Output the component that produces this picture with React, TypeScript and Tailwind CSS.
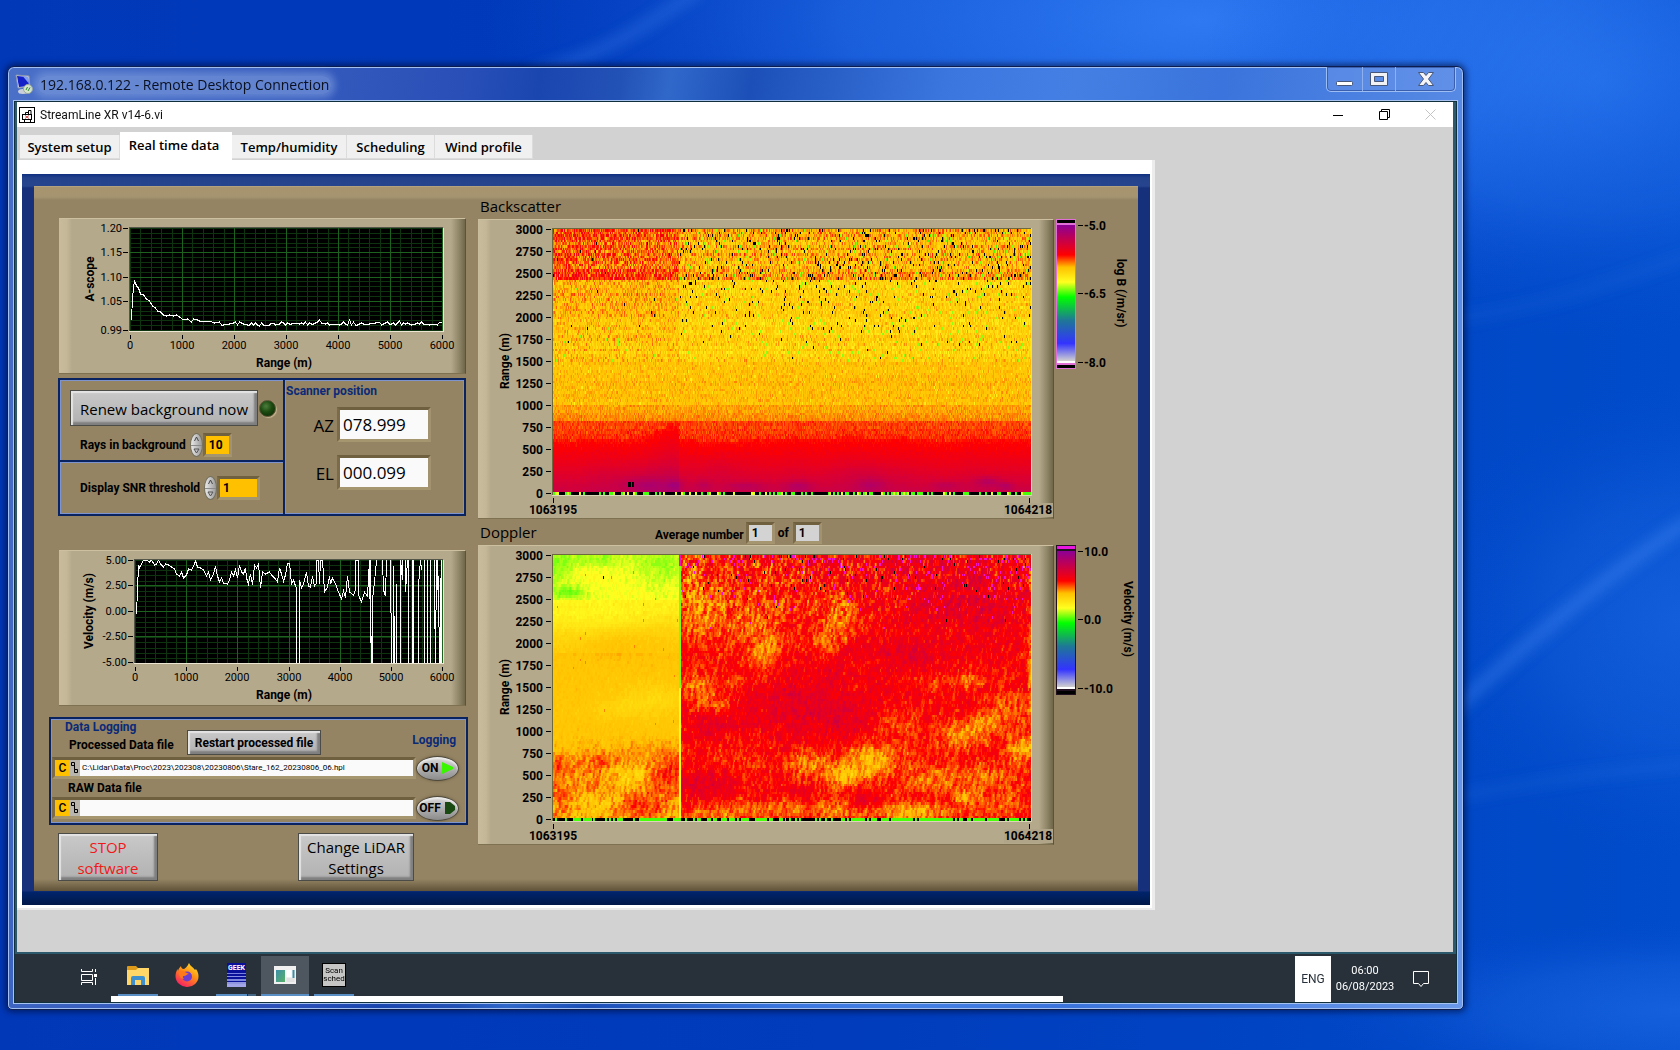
import React, { useMemo, type ReactNode } from "react";

/* ------------------------------------------------------------------ */
/* Colour scale and deterministic noise                                */
/* ------------------------------------------------------------------ */

type Stop = [number, number, number, number];

const STOPS: Stop[] = [
  [0, 140, 0, 150],
  [0.22, 255, 0, 0],
  [0.31, 255, 192, 0],
  [0.42, 255, 255, 32],
  [0.53, 0, 255, 0],
  [0.7, 30, 120, 150],
  [0.87, 51, 51, 255],
  [1, 208, 208, 208],
];

function scaleColour(t: number): string {
  const v = Math.min(1, Math.max(0, t));
  let i = 1;
  while (i < STOPS.length - 1 && STOPS[i][0] < v) i++;
  const a = STOPS[i - 1];
  const b = STOPS[i];
  const k = (v - a[0]) / (b[0] - a[0]);
  const mix = (n: number) => Math.round((a[n] as number) + ((b[n] as number) - (a[n] as number)) * k);
  return `rgb(${mix(1)},${mix(2)},${mix(3)})`;
}

function hash(x: number, y: number, s: number): number {
  let h = (x * 374761393 + y * 668265263 + s * 1442695041) | 0;
  h = Math.imul(h ^ (h >>> 13), 1274126177);
  h = Math.imul(h ^ (h >>> 15), 2246822519);
  return ((h ^ (h >>> 16)) >>> 0) / 4294967296;
}

function smooth(x: number, y: number, s: number): number {
  const xi = Math.floor(x);
  const yi = Math.floor(y);
  const fx = x - xi;
  const fy = y - yi;
  const u = fx * fx * (3 - 2 * fx);
  const v = fy * fy * (3 - 2 * fy);
  const top = hash(xi, yi, s) * (1 - u) + hash(xi + 1, yi, s) * u;
  const bot = hash(xi, yi + 1, s) * (1 - u) + hash(xi + 1, yi + 1, s) * u;
  return top * (1 - v) + bot * v;
}

type Bump = [number, number, number, number, number];

function bumps(list: Bump[], x: number, y: number): number {
  let sum = 0;
  for (const [cx, cy, rx, ry, amp] of list) {
    const dx = (x - cx) / rx;
    const dy = (y - cy) / ry;
    const d = dx * dx + dy * dy;
    if (d < 6) sum += amp * Math.exp(-d);
  }
  return sum;
}

/* ------------------------------------------------------------------ */
/* Fields                                                              */
/* ------------------------------------------------------------------ */

const PLOT_W = 478;
const PLOT_H = 266;
const ROWS = 100;
const SPLIT = 126;
const LEVELS = 64;

const BLACK = "#000000";
const MAGENTA = "#f010d0";

type Cell = number | string;

const PURPLE: Bump[] = [
  [92, 256, 22, 7, -0.05],
  [78, 245, 40, 16, -0.02],
  [122, 256, 8, 5, -0.05],
  [150, 256, 8, 5, -0.04],
  [192, 257, 20, 4, -0.04],
  [245, 257, 14, 5, -0.05],
  [165, 240, 20, 15, -0.02],
  [318, 256, 14, 6, -0.05],
  [312, 244, 30, 12, -0.02],
  [392, 256, 14, 4, -0.04],
  [434, 253, 12, 5, -0.06],
  [452, 257, 8, 4, -0.05],
];

function backscatter(x: number, row: number): Cell {
  const y = (row + 0.5) * (PLOT_H / ROWS);
  const m = 3000 - row * 30;
  const left = x < SPLIT;
  const n = hash(x, row, 1);
  const n2 = hash(x, row, 2);
  const g = n + n2 - 1;
  const stripe = hash(0, row, 3) - 0.5;

  if (m <= 30) {
    const c = hash(x >> 1, 0, 4);
    const bias = smooth(x / 30, 0, 5) * 0.5;
    if (c > 0.25 + bias) return BLACK;
    return c > 0.12 ? 0.5 : 0.43;
  }
  if (x >= 75 && x <= 80 && x !== 78 && m >= 120 && m < 180) return BLACK;

  const plume = Math.max(0, 1 - Math.abs(x - 118) / 34) * (left ? 170 : 0);
  const edge = m - plume - smooth(x / 22, 0, 6) * 50 + 25;
  if (edge < 640 && m < 870) {
    const base = edge < 300 ? 0.11 + (edge / 300) * 0.06 : 0.17 + ((edge - 300) / 340) * 0.058;
    return base + g * (edge > 460 ? 0.014 : 0.004) + bumps(PURPLE, x, y);
  }
  if (m < 870) return 0.242 + Math.max(0, edge - 640) * 0.00006 + g * 0.028 + stripe * 0.006;
  if (m < 1050) return 0.28 + ((m - 870) / 180) * 0.022 + g * 0.028 + stripe * 0.01;
  if (m < 1530) return 0.314 + g * 0.034 + stripe * 0.012 + (n > 0.97 ? 0.05 : 0);

  const far = Math.min(1, x / 300);
  if (m < 2460) {
    const drop = left ? 0.003 : 0.004 + ((m - 1530) / 900) * 0.028;
    if (n2 < drop * (m > 1700 ? 1 : 0.3)) return BLACK;
    if (hash(x, row, 8) < (left ? 0.004 : 0.012 + far * 0.02)) return 0.47;
    const red = left ? Math.max(0, (m - 1700) / 700) * 0.02 : 0;
    return (left ? 0.328 : 0.342) - red + g * 0.065 + stripe * 0.02 + (n > 0.95 ? -0.04 : 0);
  }
  const drop = left ? 0.004 : 0.055;
  if (n2 < drop) return BLACK;
  if (!left && hash(x, row, 9) < 0.05) return 0.45 + n * 0.05;
  const lowEdge = m < 2540 ? -0.02 : 0;
  const topEdge = m > 2910 ? -0.015 : 0;
  return (left ? 0.26 + x * 0.0001 : 0.312) + g * 0.08 + stripe * 0.026 + lowEdge + topEdge;
}

const WARM: Bump[] = [
  [144, 132, 24, 13, 0.07],
  [164, 152, 20, 10, 0.06],
  [182, 128, 16, 8, 0.04],
  [210, 99, 14, 24, 0.05],
  [197, 56, 54, 44, 0.04],
  [140, 30, 20, 40, 0.05],
  [150, 68, 22, 22, 0.03],
  [177, 209, 36, 22, 0.02],
  [254, 209, 22, 12, 0.065],
  [217, 255, 50, 9, 0.06],
  [155, 262, 30, 10, 0.05],
  [285, 62, 16, 22, 0.06],
  [271, 90, 14, 12, 0.05],
  [315, 205, 26, 17, 0.085],
  [288, 222, 20, 11, 0.085],
  [348, 165, 26, 18, 0.045],
  [408, 182, 26, 14, 0.065],
  [437, 167, 24, 11, 0.065],
  [415, 125, 14, 8, 0.05],
  [380, 125, 16, 8, 0.03],
  [471, 195, 18, 14, 0.085],
  [385, 225, 28, 14, 0.065],
  [358, 256, 46, 9, 0.09],
  [436, 222, 26, 14, 0.05],
  [415, 242, 14, 8, 0.07],
  [455, 250, 30, 12, 0.045],
  [455, 150, 20, 10, 0.05],
  [477, 120, 3, 44, 0.07],
  [280, 254, 24, 12, 0.05],
  [340, 205, 40, 30, 0.015],
];

const COOL: Bump[] = [
  [234, 149, 80, 30, -0.035],
  [260, 120, 30, 24, -0.02],
  [150, 229, 34, 16, -0.05],
  [351, 99, 50, 20, -0.035],
  [415, 55, 60, 26, -0.04],
  [285, 165, 46, 20, -0.03],
  [160, 170, 30, 14, -0.03],
  [251, 239, 12, 9, -0.05],
  [310, 245, 18, 10, -0.04],
  [400, 20, 60, 20, -0.02],
  [340, 150, 40, 20, -0.02],
];

const LEFT_RED: Bump[] = [
  [44, 205, 30, 12, -0.03],
  [117, 222, 22, 26, -0.07],
  [8, 240, 14, 14, -0.05],
  [4, 208, 8, 10, -0.05],
  [84, 252, 26, 14, -0.06],
  [60, 225, 10, 12, -0.03],
  [40, 232, 12, 8, -0.03],
  [118, 196, 14, 10, -0.03],
  [90, 190, 20, 6, -0.02],
  [28, 215, 24, 16, -0.02],
  [70, 222, 20, 12, 0.03],
  [48, 244, 20, 10, 0.03],
];

const LEFT_YELLOW: Bump[] = [
  [100, 145, 40, 16, 0.03],
  [60, 155, 30, 10, 0.015],
  [40, 62, 60, 14, 0.02],
  [96, 82, 44, 16, -0.02],
  [54, 90, 26, 12, -0.015],
  [15, 37, 22, 7, 0.06],
  [4, 14, 14, 14, 0.04],
  [40, 4, 40, 8, 0.03],
  [110, 12, 24, 22, 0.035],
  [44, 24, 20, 14, -0.008],
];

function doppler(x: number, row: number): Cell {
  const y = (row + 0.5) * (PLOT_H / ROWS);
  const m = 3000 - row * 30;
  const n = hash(x, row, 11);
  const n2 = hash(x, row, 12);
  const g = n + n2 - 1;

  if (m <= 30) {
    const c = hash(x >> 1, 0, 14);
    const bias = smooth(x / 24, 0, 15);
    return c < bias * 0.7 ? BLACK : 0.5;
  }
  if (x >= SPLIT && x < SPLIT + 2) {
    if (m > 2880) return MAGENTA;
    return m > 1500 ? 0.48 : 0.43;
  }
  const fine = smooth(x / 2 + y * 0.1, y / 5 - x * 0.03, 16) - 0.5;
  const grain = hash(x >> 1, row, 18) - 0.5;
  const streak = smooth((x * 0.8 - y * 0.6) / 26, (x * 0.6 + y * 0.8) / 9, 17) - 0.5;

  if (x < SPLIT) {
    if (x === 50 && row === 8) return BLACK;
    let t = 0.32;
    if (m > 2500) t = 0.415 + ((m - 2500) / 500) * 0.014;
    else if (m > 1900) t = 0.33 + ((m - 1900) / 600) * 0.065;
    t += bumps(LEFT_YELLOW, x, y);
    const low = Math.max(0, Math.min(1, (y - 178) / 30));
    const ragged = low * (bumps(LEFT_RED, x, y) + streak * 0.03 + fine * 0.06 + grain * 0.025 - 0.014);
    t += ragged + fine * (m > 2300 ? 0.03 : 0.016) + grain * (m > 2300 ? 0.02 : 0.012);
    if (low === 0 && n < 0.003) t = 0.28;
    return t;
  }

  const topBand = Math.max(0, (m - 2000) / 1000);
  const far = (x - SPLIT) / (PLOT_W - SPLIT);
  if (n < topBand * 0.014 * (m > 2600 ? 1.6 : 0.5)) return BLACK;
  if (n2 < topBand * topBand * (0.06 + far * 0.06)) return MAGENTA;
  const mottled = topBand * 0.05;
  return (
    0.216 +
    bumps(WARM, x, y) +
    bumps(COOL, x, y) +
    streak * 0.02 +
    fine * (0.08 + mottled) +
    grain * (0.034 + mottled) +
    g * 0.014
  );
}

/* ------------------------------------------------------------------ */
/* Chart pieces                                                        */
/* ------------------------------------------------------------------ */

function Heatmap({ field, x0, y0 }: { field: (x: number, row: number) => Cell; x0: number; y0: number }) {
  const paths = useMemo(() => {
    const byColour = new Map<string, string[]>();
    for (let row = 0; row < ROWS; row++) {
      const top = Math.round((row * PLOT_H) / ROWS);
      const h = Math.round(((row + 1) * PLOT_H) / ROWS) - top;
      let start = 0;
      let current = "";
      for (let x = 0; x <= PLOT_W; x++) {
        let colour = "";
        if (x < PLOT_W) {
          const c = field(x, row);
          colour = typeof c === "string" ? c : scaleColour(Math.round(c * LEVELS * 2) / (LEVELS * 2));
        }
        if (colour !== current) {
          if (current) {
            const list = byColour.get(current) ?? [];
            list.push(`M${x0 + start} ${y0 + top}h${x - start}v${h}h${start - x}z`);
            byColour.set(current, list);
          }
          current = colour;
          start = x;
        }
      }
    }
    return [...byColour.entries()].map(([fill, list]) => ({ fill, d: list.join("") }));
  }, [field, x0, y0]);
  return (
    <g shapeRendering="crispEdges">
      {paths.map((p) => (
        <path key={p.fill} fill={p.fill} d={p.d} />
      ))}
    </g>
  );
}

const PANEL =
  "border-t border-b border-r border-t-[#cdc0a0] border-b-[#7d7152] border-r-[#5d523a] bg-[linear-gradient(90deg,#c9bc9c_0,#c4b797_8px,#b5a98c_13px,#b5a98c_calc(100%-14px),#8f8567_calc(100%-6px),#6f6549_100%)]";

function HeatPanel({ title, field }: { title: string; field: (x: number, row: number) => Cell }) {
  const ticks = Array.from({ length: 13 }, (_, i) => 3000 - i * 250);
  return (
    <div className={PANEL}>
      <svg width="575" height="298" viewBox="0 1 575 298" role="img" aria-label={title} className="block">
        <rect x="74" y="9" width="479" height="267" fill="#6d6a40" />
        <path d="M553.500 9v267.500H74" fill="none" stroke="#dcd6b8" />
        <Heatmap field={field} x0={75} y0={10} />
        {ticks.map((v, i) => {
          const y = Math.round(10 + i * 22.04);
          return (
            <g key={v}>
              <path d={`M68 ${y}.5h5`} stroke="#000" />
              <text x="65" y={y + 5} textAnchor="end" className="text-[12px] font-bold">
                {v}
              </text>
            </g>
          );
        })}
        <path d="M75.5 279v5M551.5 279v5" stroke="#000" />
        <rect x="526" y="284" width="49" height="14" fill="#b0a588" />
        <text x="75" y="295" textAnchor="middle" className="text-[12px] font-bold">
          1063195
        </text>
        <text x="550" y="295" textAnchor="middle" className="text-[12px] font-bold">
          1064218
        </text>
        <text transform="translate(31 142) rotate(-90)" textAnchor="middle" className="text-[12px] font-bold">
          Range (m)
        </text>
      </svg>
    </div>
  );
}

function ColourBar({
  id,
  labels,
  name,
  nameX,
  capTop,
  outline,
}: {
  id: string;
  labels: string[];
  name: string;
  nameX: number;
  capTop: string;
  outline: string;
}) {
  return (
    <svg width="82" height="150" viewBox="0 0 82 150" role="img" aria-label={name} className="block shrink-0">
      <defs>
        <linearGradient id={id} x1="0" y1="0" x2="0" y2="1">
          {STOPS.map(([t]) => (
            <stop key={t} offset={t} stopColor={scaleColour(t)} />
          ))}
        </linearGradient>
      </defs>
      <rect width="20" height="150" fill={outline} />
      <rect x="1" y="1" width="18" height="3" fill={capTop} />
      <rect x="1" y="6" width="18" height="136" fill={`url(#${id})`} />
      <rect x="1" y="142" width="18" height="2" fill="#fff" />
      <rect x="1" y="146" width="18" height="3" fill="#000" />
      {labels.map((label, i) => {
        const y = [6, 74, 143][i];
        return (
          <g key={label}>
            <path d={`M22 ${y}.5h5`} stroke="#000" />
            <text x="28" y={y + 5} className="text-[12px] font-bold">
              {label}
            </text>
          </g>
        );
      })}
      <text transform={`translate(${nameX} 74) rotate(90)`} textAnchor="middle" className="text-[12px] font-bold">
        {name}
      </text>
    </svg>
  );
}

type Pt = [number, number];

const SCOPE: Pt[] = (() => {
  const pts: Pt[] = [
    [72, 102], [73, 80], [74, 70], [75, 63], [76, 65], [77, 68], [79, 70], [81, 76], [84, 77], [87, 81], [90, 83], [93, 88],
    [96, 90], [98, 93], [101, 94], [104, 97], [107, 98], [110, 97], [114, 98], [117, 97], [120, 99], [124, 102], [128, 101],
    [132, 104], [134, 101], [138, 102], [142, 104], [146, 103], [150, 103], [155, 105], [160, 104],
  ];
  for (let x = 162; x <= 383; x += 2) {
    const spike = hash(x, 0, 30) > 0.93 ? -2 : 0;
    pts.push([x, Math.round(104 + hash(x, 0, 31) * 3.6 + spike)]);
  }
  return pts;
})();

const VELOCITY: Pt[] = [
  [77, 64], [78, 40], [79, 15], [80, 18], [82, 14], [84, 10], [87, 10], [90, 12], [92, 10], [95, 15], [97, 14], [99, 10],
  [101, 14], [104, 17], [106, 14], [109, 15], [112, 17], [115, 19], [117, 24], [120, 26], [122, 22], [124, 28], [127, 25],
  [129, 19], [132, 20], [134, 16], [136, 11], [138, 17], [141, 18], [144, 20], [147, 26], [149, 22], [151, 30], [154, 24],
  [156, 16], [158, 26], [160, 32], [162, 28], [164, 33], [168, 34], [170, 30], [172, 22], [174, 26], [176, 20], [178, 28],
  [180, 15], [182, 22], [184, 24], [186, 18], [187, 28], [189, 34], [191, 24], [193, 35], [195, 15], [197, 18], [199, 14],
  [201, 38], [203, 22], [206, 24], [210, 22], [213, 26], [216, 29], [218, 32], [220, 18], [222, 24], [224, 31], [226, 25],
  [228, 13], [230, 13], [232, 34], [234, 30], [236, 36], [237, 38], [237, 113], [240, 113], [240, 30], [242, 38], [244, 34],
  [247, 22], [249, 36], [251, 37], [253, 26], [255, 36], [257, 33], [257, 10], [259, 10], [260, 34], [261, 10], [263, 10],
  [265, 42], [268, 37], [270, 26], [271, 34], [273, 28], [276, 34], [279, 42], [282, 49], [284, 41], [286, 48], [288, 26],
  [290, 42], [294, 45], [296, 40], [296, 10], [299, 10], [299, 45], [302, 52], [305, 42], [308, 46], [310, 10], [311, 86],
  [313, 113], [313, 50], [316, 22], [317, 10],
];

const BURSTS: Pt[][] = [
  [[311, 10], [311, 86], [312, 86], [312, 113]],
  [[323, 10], [324, 40], [326, 46], [327, 10]],
  [[331, 10], [332, 113]],
  [[334, 113], [334, 16], [335, 113]],
  [[337, 113], [337, 34]],
  [[341, 113], [341, 10], [343, 30], [343, 10]],
  [[346, 10], [346, 42], [348, 10]],
  [[349, 113], [349, 10]],
  [[353, 113], [353, 10]],
  [[354, 113], [354, 10]],
  [[359, 113], [359, 36], [361, 10], [362, 20]],
  [[365, 113], [365, 10]],
  [[368, 10], [368, 113]],
  [[371, 10], [371, 113]],
  [[375, 10], [375, 42], [376, 113], [377, 10]],
  [[378, 40], [378, 10], [379, 40], [380, 113]],
  [[381, 28], [381, 113]],
  [[382, 10], [382, 113]],
];

function Trace({
  name,
  nameX,
  left,
  right,
  yTicks,
  minor,
  lines,
}: {
  name: string;
  nameX: number;
  left: number;
  right: number;
  yTicks: [string, number][];
  minor: number;
  lines: Pt[][];
}) {
  const top = 10;
  const bottom = 113;
  const w = right - left;
  const xs = Array.from({ length: 31 }, (_, i) => Math.round(left + ((w - 1) * i) / 30));
  const ys: number[] = [];
  for (let y = top; y < bottom; y += minor) ys.push(Math.round(y));
  return (
    <div className={`ml-[10px] w-fit ${PANEL}`}>
      <svg width="406" height="154" viewBox="0 1 406 154" role="img" aria-label={`${name} against range`} className="block">
        <g shapeRendering="crispEdges">
          <rect x={left} y={top} width={w} height={bottom - top} fill="#000" />
          <path d={xs.map((x) => `M${x}.5 ${top}V${bottom}`).join("")} stroke="#0d330f" />
          <path d={ys.map((y) => `M${left} ${y}.5H${right}`).join("")} stroke="#0d330f" />
          <path d={xs.filter((_, i) => i % 5 === 0 && i > 0).map((x) => `M${x}.5 ${top}V${bottom}`).join("")} stroke="#1d611f" />
          <path
            d={yTicks
              .slice(1, 4)
              .map(([, y]) => `M${left} ${y}.5H${right}`)
              .join("")}
            stroke="#1d611f"
          />
          {lines.map((pts, i) => (
            <polyline key={i} points={pts.map(([x, y]) => `${x + 0.5},${y}`).join(" ")} fill="none" stroke="#fff" />
          ))}
          <path d={`M${left - 1}.5 ${bottom}V${top - 1}.5H${right}`} fill="none" stroke="#55564a" />
          <path d={`M${left - 1} ${bottom}.5H${right}.5V${top}`} fill="none" stroke="#ece6d2" />
        </g>
        {yTicks.map(([t, y]) => (
          <g key={t}>
            <path d={`M${left - 7} ${y}.5h5`} stroke="#000" />
            <text x={left - 8} y={y + 4} textAnchor="end" className="text-[11px] font-normal">
              {t}
            </text>
          </g>
        ))}
        {[0, 1, 2, 3, 4, 5, 6].map((k) => (
          <g key={k}>
            <path d={`M${xs[k * 5]}.5 117v4`} stroke="#000" />
            <text x={xs[k * 5]} y="131" textAnchor="middle" className="text-[11px] font-normal">
              {k * 1000}
            </text>
          </g>
        ))}
        <text x="225" y="149" textAnchor="middle" className="text-[12px] font-bold">
          Range (m)
        </text>
        <text transform={`translate(${nameX} 61) rotate(-90)`} textAnchor="middle" className="text-[12px] font-bold">
          {name}
        </text>
      </svg>
    </div>
  );
}

/* ------------------------------------------------------------------ */
/* Front panel controls                                                */
/* ------------------------------------------------------------------ */

const SUNK = "border-[3px] border-t-[#6f603f] border-l-[#7b6b49] border-r-[#a39270] border-b-[#a6966f]";
const RAISED =
  "border border-[#4b4b47] bg-[linear-gradient(180deg,#c9c9c9,#b1b1b1)] shadow-[inset_2px_2px_1px_#e4e4e4,inset_-3px_-3px_2px_#7f7f7f]";
const BOX = "border-2 border-[#08235f] shadow-[inset_0_0_0_1px_#7d94cf]";
const PLAIN = "font-['Open_Sans',sans-serif] font-normal";

function Spinner({ name }: { name: string }) {
  return (
    <div className="flex h-6 w-[13px] flex-col overflow-hidden rounded-[50%] border border-[#75715f] bg-[linear-gradient(90deg,#e9e9e9,#9a9a9a)]">
      <button type="button" aria-label={`Increase ${name}`} className="flex flex-1 items-center justify-center border-b border-[#8a8a8a]">
        <svg width="7" height="6" viewBox="0 0 7 6" aria-hidden="true">
          <path d="M1.500 5L3.500 1L5.500 5" fill="none" stroke="#444" />
        </svg>
      </button>
      <button type="button" aria-label={`Decrease ${name}`} className="flex flex-1 items-center justify-center">
        <svg width="7" height="6" viewBox="0 0 7 6" aria-hidden="true">
          <path d="M1 1h5L3.500 5z" fill="none" stroke="#555" />
        </svg>
      </button>
    </div>
  );
}

function NumberField({ id, label, value, width }: { id: string; label: string; value: string; width: string }) {
  return (
    <div className="flex h-[26px] items-center gap-1 pl-5">
      <label htmlFor={id}>{label}</label>
      <div className="flex items-center">
        <Spinner name={label} />
        <input id={id} defaultValue={value} className={`h-6 bg-[#ffc000] pl-[3px] font-bold ${SUNK} ${width}`} />
      </div>
    </div>
  );
}

function Readout({ id, label, value }: { id: string; label: string; value: string }) {
  return (
    <div className="flex items-center justify-end gap-[3px]">
      <label htmlFor={id} className={`pt-[2px] text-[17px] ${PLAIN}`}>
        {label}
      </label>
      <input id={id} readOnly defaultValue={value} className={`h-[35px] w-[94px] bg-[#fafafa] pl-[3px] text-[17px] ${PLAIN} ${SUNK}`} />
    </div>
  );
}

function PathField({ id, value, on }: { id: string; value: string; on: boolean }) {
  return (
    <div className="flex h-6 items-center">
      <div className={`flex h-[22px] w-[364px] ${SUNK}`}>
        <span className="flex w-[15px] items-center justify-center bg-[#ffc000] text-[12px] font-medium">C</span>
        <svg width="10" height="16" viewBox="0 0 10 16" aria-hidden="true" className="bg-[#b9b6ae]">
          <path d="M1.500 2.500h3v3h-3zM4.500 4.500v5M4.500 9.500h3v3h-3z" fill="none" stroke="#000" />
        </svg>
        <input id={id} defaultValue={value} className="min-w-0 flex-1 bg-[#fafafa] pl-[2px] text-[8px] font-normal" />
      </div>
      <button
        type="button"
        aria-pressed={on}
        className="flex h-[25px] w-[43px] items-center justify-center gap-1 rounded-[50%] border border-[#4d483a] bg-[linear-gradient(180deg,#d8d8d8,#8b8b8b)] text-[12px] font-bold shadow-[0_0_3px_#6a5c3e,inset_0_2px_2px_#eee]"
      >
        {on ? "ON" : "OFF"}
        <svg width="11" height="12" viewBox="0 0 11 12" aria-hidden="true">
          <path d={on ? "M0 0l11 5v2L0 12z" : "M0 0h5l5 4v4l-5 4H0z"} fill={on ? "#39f500" : "#184a12"} />
        </svg>
      </button>
    </div>
  );
}

function Panel() {
  return (
    <div className="flex gap-[9px] border-t border-[#b3a27d] bg-[linear-gradient(180deg,#a8956f_0,#a59470_10px,#948464_13px,#948464_calc(100%-12px),#5f5238_100%)] pb-[10px] pl-[15px]">
      <div className="w-[420px] pt-[31px]">
        <Trace
          name="A-scope"
          nameX={35}
          left={71}
          right={384}
          minor={4.86}
          yTicks={[["1.20", 10], ["1.15", 34], ["1.10", 59], ["1.05", 83], ["0.99", 112]]}
          lines={[SCOPE]}
        />
        <section className={`mt-1 ml-[9px] grid h-[138px] w-[408px] grid-cols-[223px_1fr] ${BOX}`}>
          <div className="flex flex-col">
            <div className="flex h-20 flex-col gap-[6px] pt-[10px]">
              <div className="flex items-center gap-px pl-[10px]">
                <button type="button" className={`h-9 w-[188px] pt-[2px] text-[15px] ${PLAIN} ${RAISED}`}>
                  Renew background now
                </button>
                <span
                  role="status"
                  aria-label="Background idle"
                  className="size-[17px] rounded-full border border-[#5b5236] bg-[radial-gradient(circle_at_40%_35%,#4d7d3d,#1b4a10_45%,#072203)] shadow-[1px_1px_1px_#c5b58c]"
                />
              </div>
              <NumberField id="rays" label="Rays in background" value="10" width="w-[29px]" />
            </div>
            <div className="flex-1 border-t-2 border-[#08235f] pt-[13px] shadow-[inset_0_1px_0_#7d94cf]">
              <NumberField id="snr" label="Display SNR threshold" value="1" width="w-[43px]" />
            </div>
          </div>
          <div className="flex flex-col gap-[13px] border-l-2 border-[#08235f] pr-[33px] shadow-[inset_1px_0_0_#7d94cf]">
            <h2 className="mt-1 -mb-1 pl-px leading-[14px] font-bold text-[#0a2a78]">Scanner position</h2>
            <Readout id="az" label="AZ" value="078.999" />
            <Readout id="el" label="EL" value="000.099" />
          </div>
        </section>
        <div className="mt-[34px]">
          <Trace
            name="Velocity (m/s)"
            nameX={34}
            left={76}
            right={384}
            minor={5.15}
            yTicks={[["5.00", 10], ["2.50", 35], ["0.00", 61], ["-2.50", 86], ["-5.00", 112]]}
            lines={[VELOCITY, ...BURSTS]}
          />
        </div>
        <section className={`mt-[11px] h-[108px] w-[419px] px-px ${BOX}`}>
          <div className="flex h-[37px] items-start">
            <div className="w-[135px] leading-[21px]">
              <h2 className="pl-[13px] leading-4 font-bold text-[#0a2a78]">Data Logging</h2>
              <label htmlFor="proc" className="block pl-[17px]">
                Processed Data file
              </label>
            </div>
            <button type="button" className={`mt-[11px] h-[25px] w-[134px] text-[12px] font-bold ${RAISED}`}>
              Restart processed file
            </button>
            <span className="mt-[14px] mr-[9px] ml-auto leading-[14px] text-[#0a2a78]">Logging</span>
          </div>
          <PathField id="proc" value={"C:\\Lidar\\Data\\Proc\\2023\\202308\\20230806\\Stare_162_20230806_06.hpl"} on />
          <label htmlFor="raw" className="block pl-4 leading-4">
            RAW Data file
          </label>
          <PathField id="raw" value="" on={false} />
        </section>
        <div className="mt-2 flex items-start justify-between pr-[55px] pl-[9px]">
          <button type="button" className={`h-12 w-[100px] pt-[2px] text-[15px] leading-[21px] text-[#f01818] ${PLAIN} ${RAISED}`}>
            STOP
            <br />
            software
          </button>
          <button type="button" className={`h-12 w-[116px] pt-[2px] text-[15px] leading-[21px] ${PLAIN} ${RAISED}`}>
            Change LiDAR
            <br />
            Settings
          </button>
        </div>
      </div>
      <div className="pt-[10px]">
        <h2 className={`h-[22px] pl-[2px] text-[15px] leading-[18px] ${PLAIN}`}>Backscatter</h2>
        <div className="flex gap-[2px]">
          <HeatPanel title="Backscatter" field={backscatter} />
          <ColourBar id="bar-b" labels={["-5.0", "-6.5", "-8.0"]} name="log B (/m/sr)" nameX={61} capTop="#000" outline="#e070d8" />
        </div>
        <div className="flex h-[26px] items-center">
          <h2 className={`w-[177px] pl-[2px] text-[15px] ${PLAIN}`}>Doppler</h2>
          <label htmlFor="avg" className="mr-[2px] pt-[6px]">
            Average number
          </label>
          <input id="avg" readOnly defaultValue="1" className={`mt-[2px] h-[22px] w-[29px] bg-[#d3d3d3] pl-[3px] ${SUNK}`} />
          <label htmlFor="avg-total" className="pt-[2px] pr-[4px] pl-[3px]">
            of
          </label>
          <input id="avg-total" readOnly defaultValue="1" className={`mt-[2px] h-[22px] w-[29px] bg-[#d3d3d3] pl-[3px] ${SUNK}`} />
        </div>
        <div className="flex gap-[2px]">
          <HeatPanel title="Doppler" field={doppler} />
          <ColourBar id="bar-d" labels={["10.0", "0.0", "-10.0"]} name="Velocity (m/s)" nameX={68} capTop="#e818e0" outline="#201020" />
        </div>
      </div>
    </div>
  );
}

/* ------------------------------------------------------------------ */
/* Windows and taskbar                                                 */
/* ------------------------------------------------------------------ */

function Caption({ label, className, children }: { label: string; className: string; children: ReactNode }) {
  return (
    <button type="button" aria-label={label} className={`flex h-full items-center justify-center ${className}`}>
      {children}
    </button>
  );
}

function RemoteTitle() {
  return (
    <header className="flex h-[33px] items-start pl-[2px]">
      <div className="flex h-full items-center gap-1 pt-[2px]">
        <svg width="19" height="21" viewBox="0 0 19 21" aria-hidden="true">
          <path d="M1 1l13 1 1 11-12 1z" fill="#dfe6f0" stroke="#8a96ad" />
          <path d="M2 2l11 1 1 9-10 1z" fill="#1420c8" />
          <path d="M8 2.500l5 .5.500 6z" fill="#7fa0f0" />
          <ellipse cx="8" cy="17.500" rx="5" ry="2.500" fill="#c9cfda" />
          <circle cx="13" cy="15" r="4.500" fill="#d6e6cc" stroke="#9aa89a" />
          <path d="M11 16l1.500-3M13 17l2-3.500" stroke="#2e8a2e" />
        </svg>
        <h1 className="rounded-lg bg-[#7f9cdc]/60 px-[2px] font-['Open_Sans',sans-serif] text-[14px] leading-[18px] text-[#0a1020] shadow-[0_0_7px_4px_rgba(127,156,220,0.6)]">
          192.168.0.122 - Remote Desktop Connection
        </h1>
      </div>
      <div className="mr-[2px] ml-auto flex h-[25px] overflow-hidden rounded-b-[5px] border border-t-0 border-[#9dbdf5] bg-[#6a96ea]/50 shadow-[inset_0_0_0_1px_#3a5fae]">
        <Caption label="Minimize" className="w-9 border-r border-[#8fb0ee]">
          <svg width="18" height="15" viewBox="0 0 18 15" aria-hidden="true">
            <rect x=".5" y="9.500" width="16" height="4" rx="1" fill="#fff" stroke="#47577a" />
          </svg>
        </Caption>
        <Caption label="Maximize" className="w-[33px] border-r border-[#8fb0ee]">
          <svg width="18" height="15" viewBox="0 0 18 15" aria-hidden="true">
            <path d="M.500 .500h17v13h-17zM4.500 4.500v5h9v-5z" fill="#f2f2f4" fillRule="evenodd" stroke="#47577a" />
          </svg>
        </Caption>
        <Caption label="Close" className="w-[59px]">
          <svg width="16" height="14" viewBox="0 0 16 14" aria-hidden="true">
            <path d="M.500 .500h5L8 3.500 10.500.500h5L10.500 7l5 6.500h-5L8 10.500 5.500 13.500h-5L5.500 7z" fill="#f5f5f7" stroke="#47577a" />
          </svg>
        </Caption>
      </div>
    </header>
  );
}

function AppTitle() {
  return (
    <div className="flex h-[25px] items-center bg-white pl-[2px]">
      <svg width="16" height="16" viewBox="0 0 16 16" aria-hidden="true">
        <rect x=".5" y=".5" width="15" height="15" fill="#fff" stroke="#000" />
        <rect x="3.500" y="7.500" width="9" height="5" fill="#fff" stroke="#000" />
        <path d="M6.500 7V5.500h3M9.500 7V3.500h2.500V7M5.500 13v2M11.500 13v2" fill="none" stroke="#000" />
        <path d="M6 11.500l4-3M6 8.500l4 3" stroke="#d04848" />
      </svg>
      <span className="pl-[5px] text-[12px] text-[#111]">StreamLine XR v14-6.vi</span>
      <div className="ml-auto flex h-full">
        <Caption label="Minimize window" className="w-[46px]">
          <svg width="10" height="10" viewBox="0 0 10 10" aria-hidden="true">
            <path d="M0 5.500h10" stroke="#000" />
          </svg>
        </Caption>
        <Caption label="Restore window" className="w-[46px]">
          <svg width="11" height="11" viewBox="0 0 11 11" aria-hidden="true">
            <path d="M.500 2.500h8v8h-8zM2.500 2.500v-2h8v8h-2" fill="none" stroke="#000" />
          </svg>
        </Caption>
        <Caption label="Close window" className="w-[46px]">
          <svg width="11" height="11" viewBox="0 0 11 11" aria-hidden="true">
            <path d="M.500 .500l10 10M10.500 .500l-10 10" stroke="#c4c4c4" />
          </svg>
        </Caption>
      </div>
    </div>
  );
}

const TABS: [string, string][] = [
  ["System setup", "w-[100px]"],
  ["Real time data", "w-[112px]"],
  ["Temp/humidity", "w-[115px]"],
  ["Scheduling", "w-[88px]"],
  ["Wind profile", "w-[98px]"],
];

function Tabs() {
  return (
    <div role="tablist" className="flex h-[33px] items-end pl-[3px] font-['Open_Sans',sans-serif] text-[13px] font-semibold">
      {TABS.map(([name, width]) => {
        const active = name === "Real time data";
        return (
          <button
            key={name}
            type="button"
            role="tab"
            aria-selected={active}
            className={
              active
                ? `h-7 bg-white pr-[4px] pb-px ${width}`
                : `mb-px h-6 border-r border-b border-[#dcdcdc] bg-[#f0f0f0] pt-[2px] ${width}`
            }
          >
            {name}
          </button>
        );
      })}
    </div>
  );
}

function TaskItem({
  label,
  line,
  active,
  children,
}: {
  label: string;
  line?: "full" | "split";
  active?: boolean;
  children: ReactNode;
}) {
  return (
    <button type="button" aria-label={label} className={`flex h-10 w-12 flex-col items-center ${active ? "bg-[#4e575f]" : ""}`}>
      <span className="flex h-[38px] items-center justify-center">{children}</span>
      {line === "full" && <span className={`h-[2px] bg-[#5a8fc6] ${active ? "w-12" : "w-10"}`} />}
      {line === "split" && (
        <span className="flex h-[2px] w-10 gap-px">
          <span className="w-[31px] bg-[#5a8fc6]" />
          <span className="w-2 bg-[#456584]" />
        </span>
      )}
    </button>
  );
}

function Taskbar() {
  return (
    <footer className="flex h-12 bg-[#28313a] text-white">
      <div className="flex flex-1 flex-col">
        <div className="flex h-[42px] gap-px pt-[2px] pl-[50px]">
          <TaskItem label="Task view">
            <svg width="17" height="16" viewBox="0 0 17 16" aria-hidden="true" className="mt-1">
              <path d="M.500 0v2.500h11V0M.500 5.500h11v6h-11zM.500 16v-2.500h11V16M14.500 0v3M14.500 9v7" fill="none" stroke="#fff" />
              <rect x="13" y="5" width="3" height="3" fill="#fff" />
            </svg>
          </TaskItem>
          <TaskItem label="File Explorer" line="full">
            <svg width="22" height="19" viewBox="0 0 22 19" aria-hidden="true">
              <path d="M0 1a1 1 0 011-1h8l2 2v3H0z" fill="#dd9a1a" />
              <path d="M0 4h9l2-2h11v17H0z" fill="#ffd667" />
              <path d="M4 19v-7a2 2 0 012-2h10a2 2 0 012 2v7h-4v-5H8v5z" fill="#3f8fcc" />
            </svg>
          </TaskItem>
          <TaskItem label="Firefox">
            <svg width="24" height="24" viewBox="0 0 24 24" aria-hidden="true">
              <defs>
                <linearGradient id="fox" x1=".8" y1="0" x2=".2" y2="1">
                  <stop offset="0" stopColor="#ffe226" />
                  <stop offset=".45" stopColor="#ff8a16" />
                  <stop offset="1" stopColor="#f5156c" />
                </linearGradient>
              </defs>
              <path
                d="M14 0c1 3 4 4 6 7l1-1c2 3 2.500 5 2.500 7.500A11.300 10.500 0 0112 24 11.300 11 0 01.500 13c0-3 1-5 2-7l.5 2c.5-2 1.500-3.500 3-5 0 1.500 1 2.500 2 3 2 0 4-2 6-6z"
                fill="url(#fox)"
              />
              <circle cx="12" cy="13.500" r="5" fill="#6d3fd0" />
              <path d="M4 10c2-2 4-2 6-1 1 1 3 1 4 2-2 0-3 2-5 2s-1 2 0 3c-3 0-5-3-5-6z" fill="#ff7a1a" />
            </svg>
          </TaskItem>
          <TaskItem label="Geek" line="split">
            <svg width="19" height="24" viewBox="0 0 19 24" aria-hidden="true" shapeRendering="crispEdges">
              <rect width="19" height="24" fill="#0a109a" />
              <rect y="10" width="19" height="1" fill="#7a80e0" />
              <rect y="13" width="19" height="1" fill="#8a90e4" />
              <rect y="16" width="19" height="2" fill="#8088dc" />
              <rect y="19" width="19" height="2" fill="#9096e0" />
              <rect y="21" width="19" height="3" fill="#a2a6e8" />
              <text x="9.500" y="7" textAnchor="middle" fill="#fff" className="text-[7px] font-bold">
                GEEK
              </text>
            </svg>
          </TaskItem>
          <TaskItem label="StreamLine XR" line="full" active>
            <svg width="22" height="18" viewBox="0 0 22 18" aria-hidden="true">
              <defs>
                <linearGradient id="app" x1="0" y1="0" x2="1" y2="1">
                  <stop offset="0" stopColor="#3c8fa8" />
                  <stop offset="1" stopColor="#5ab06a" />
                </linearGradient>
              </defs>
              <rect width="22" height="18" fill="#f0f0f0" />
              <rect x="2" y="4" width="9" height="12" fill="url(#app)" />
              <rect x="12.500" y="4" width="5" height="7" fill="#fff" />
              <rect x="18.500" y="4" width="2" height="8" fill="#3c8fa8" />
              <rect x="12.500" y="12" width="8" height="4" fill="#e2e2e2" />
            </svg>
          </TaskItem>
          <TaskItem label="Scan sched" line="full">
            <span className="flex size-6 flex-col justify-center border border-black bg-[#c6c6c6] text-[8px] leading-[8px] text-black">
              <span>Scan</span>
              <span>sched</span>
            </span>
          </TaskItem>
        </div>
        <div className="ml-24 h-[6px] w-[75%] max-w-[952px] bg-white" />
      </div>
      <div className="mt-[2px] flex items-center">
        <button type="button" className="h-full w-9 bg-white text-[12px] text-[#28313a]">
          ENG
        </button>
        <time className="w-[68px] text-center text-[11px] leading-4">
          06:00
          <br />
          06/08/2023
        </time>
        <button type="button" aria-label="Notifications" className="mr-[27px] ml-[14px]">
          <svg width="16" height="17" viewBox="0 0 16 17" aria-hidden="true">
            <path d="M.500 .500h15v12H10.500L8 15.500 5.500 12.500H.500z" fill="none" stroke="#fff" />
          </svg>
        </button>
      </div>
    </footer>
  );
}

function Wallpaper() {
  return (
    <svg viewBox="0 0 1680 1050" preserveAspectRatio="none" aria-hidden="true" className="absolute inset-0 h-full w-full">
      <defs>
        <linearGradient id="base" x1="0" y1="0" x2="1" y2="0">
          <stop offset="0" stopColor="#0038b8" />
          <stop offset=".5" stopColor="#003cbc" />
          <stop offset="1" stopColor="#004cca" />
        </linearGradient>
        <radialGradient id="glow" cx=".5" cy=".5" r=".5">
          <stop offset="0" stopColor="#3480f8" stopOpacity=".9" />
          <stop offset=".5" stopColor="#2a74f0" stopOpacity=".6" />
          <stop offset="1" stopColor="#0a50d8" stopOpacity="0" />
        </radialGradient>
        <filter id="soft" x="-20%" y="-50%" width="140%" height="200%">
          <feGaussianBlur stdDeviation="7" />
        </filter>
      </defs>
      <rect width="1680" height="1050" fill="url(#base)" />
      <ellipse cx="1200" cy="20" rx="720" ry="280" fill="url(#glow)" />
      <ellipse cx="1600" cy="80" rx="400" ry="260" fill="url(#glow)" opacity=".6" />
      <ellipse cx="1680" cy="620" rx="260" ry="240" fill="url(#glow)" opacity=".4" />
      <ellipse cx="1680" cy="1010" rx="360" ry="90" fill="url(#glow)" opacity=".45" />
      <g filter="url(#soft)" fill="none" stroke="#5a9cff">
        <path d="M530 74C620 50 650 20 700-10" strokeWidth="7" opacity=".4" />
        <path d="M1440 722C1530 640 1600 580 1690 520" strokeWidth="12" opacity=".35" />
        <path d="M1440 800C1540 780 1620 770 1690 765" strokeWidth="6" opacity=".2" />
        <path d="M1440 320C1540 310 1620 280 1690 255" strokeWidth="10" opacity=".1" />
      </g>
    </svg>
  );
}

export default function App() {
  return (
    <div className="relative flex h-screen min-h-[1050px] flex-col overflow-hidden bg-[#0038b8] pt-[66px] pr-[216px] pb-10 pl-[7px] font-['Roboto',sans-serif] text-black">
      <Wallpaper />
      <main className="relative flex min-h-0 flex-1 flex-col rounded-t-[7px] rounded-b-[5px] border border-[#0a1c50] bg-[linear-gradient(100deg,#4a70c8_0,#2a50b8_28%,#1a46b0_33%,#2352b6_38%,#3068ca_41%,#1c50b8_46%,#3a76de_58%,#4480e4_66%,#3a74dc_75%,#6a98ea_100%)] px-[5px] pb-[5px] shadow-[0_0_6px_2px_rgba(0,10,50,0.6),inset_0_0_0_1px_#a3c0f2]">
        <RemoteTitle />
        <div className="flex min-h-0 flex-1 flex-col border border-[#a8c2f0] bg-[#10303e] p-px">
          <div className="flex min-h-0 flex-1 flex-col border-r-[3px] border-b-2 border-l-2 border-[#2c5a6c] bg-[#d2d2d2]">
            <AppTitle />
            <Tabs />
            <div className="w-fit border-r-[3px] border-b-2 border-[#ececec] bg-white pt-[14px] pr-[2px] pb-[3px] pl-[5px]">
              <div className="bg-[linear-gradient(180deg,#0f2f80_0,#24428c_4px,#27458f_12px,#16307c_14px,#16307c_calc(100%-14px),#00246c_calc(100%-13px),#001848_100%)] px-3 pt-3 pb-[14px] text-[12px] font-bold">
                <Panel />
              </div>
            </div>
          </div>
          <Taskbar />
        </div>
      </main>
    </div>
  );
}
